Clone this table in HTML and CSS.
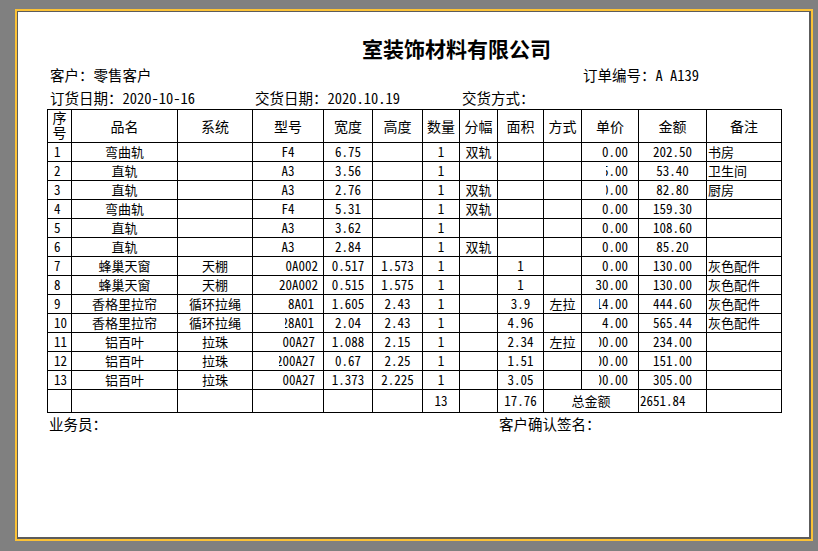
FILE: index.html
```html
<!DOCTYPE html>
<html lang="zh-CN">
<head>
<meta charset="utf-8">
<title>销售订单</title>
<link rel="stylesheet" href="styles.css">
</head>
<body>
<div class="sheet">
  <div class="paper">
    <div class="title">室装饰材料有限公司</div>
    <div class="info">
      <span class="w533">客户：零售客户</span>
      <span>订单编号：A A139</span>
    </div>
    <div class="info info2">
      <span class="w205">订货日期：2020-10-16</span>
      <span class="w207">交货日期：2020.10.19</span>
      <span>交货方式：</span>
    </div>
    <div class="grid">
      <div class="h"><span class="stack">序号</span></div>
      <div class="h">品名</div>
      <div class="h">系统</div>
      <div class="h">型号</div>
      <div class="h">宽度</div>
      <div class="h">高度</div>
      <div class="h">数量</div>
      <div class="h">分幅</div>
      <div class="h">面积</div>
      <div class="h">方式</div>
      <div class="h">单价</div>
      <div class="h">金额</div>
      <div class="h">备注</div>

      <div class="l n">1</div><div>弯曲轨</div><div></div><div>F4</div><div>6.75</div><div></div><div>1</div><div>双轨</div><div></div><div></div><div class="p">0.00</div><div>202.50</div><div class="l">书房</div>
      <div class="l n">2</div><div>直轨</div><div></div><div>A3</div><div>3.56</div><div></div><div>1</div><div></div><div></div><div></div><div class="p"><span class="clip k3"><span>5.00</span></span></div><div>53.40</div><div class="l">卫生间</div>
      <div class="l n">3</div><div>直轨</div><div></div><div>A3</div><div>2.76</div><div></div><div>1</div><div>双轨</div><div></div><div></div><div class="p"><span class="clip k3"><span>0.00</span></span></div><div>82.80</div><div class="l">厨房</div>
      <div class="l n">4</div><div>弯曲轨</div><div></div><div>F4</div><div>5.31</div><div></div><div>1</div><div>双轨</div><div></div><div></div><div class="p">0.00</div><div>159.30</div><div class="l"></div>
      <div class="l n">5</div><div>直轨</div><div></div><div>A3</div><div>3.62</div><div></div><div>1</div><div></div><div></div><div></div><div class="p">0.00</div><div>108.60</div><div class="l"></div>
      <div class="l n">6</div><div>直轨</div><div></div><div>A3</div><div>2.84</div><div></div><div>1</div><div>双轨</div><div></div><div></div><div class="p">0.00</div><div>85.20</div><div class="l"></div>
      <div class="l n">7</div><div>蜂巢天窗</div><div>天棚</div><div class="m m5">0A002</div><div>0.517</div><div>1.573</div><div>1</div><div></div><div>1</div><div></div><div class="p">0.00</div><div>130.00</div><div class="l">灰色配件</div>
      <div class="l n">8</div><div>蜂巢天窗</div><div>天棚</div><div class="m m5">20A002</div><div>0.515</div><div>1.575</div><div>1</div><div></div><div>1</div><div></div><div class="p">30.00</div><div>130.00</div><div class="l">灰色配件</div>
      <div class="l n">9</div><div>香格里拉帘</div><div>循环拉绳</div><div class="m m9">8A01</div><div>1.605</div><div>2.43</div><div>1</div><div></div><div>3.9</div><div>左拉</div><div class="p"><span class="clip k4"><span>14.00</span></span></div><div>444.60</div><div class="l">灰色配件</div>
      <div class="l n">10</div><div>香格里拉帘</div><div>循环拉绳</div><div class="m m9"><span class="clip k4"><span>28A01</span></span></div><div>2.04</div><div>2.43</div><div>1</div><div></div><div>4.96</div><div></div><div class="p">4.00</div><div>565.44</div><div class="l">灰色配件</div>
      <div class="l n">11</div><div>铝百叶</div><div>拉珠</div><div class="m m8">00A27</div><div>1.088</div><div>2.15</div><div>1</div><div></div><div>2.34</div><div>左拉</div><div class="p"><span class="clip k4"><span>00.00</span></span></div><div>234.00</div><div class="l"></div>
      <div class="l n">12</div><div>铝百叶</div><div>拉珠</div><div class="m m8"><span class="clip k5"><span>200A27</span></span></div><div>0.67</div><div>2.25</div><div>1</div><div></div><div>1.51</div><div></div><div class="p"><span class="clip k4"><span>00.00</span></span></div><div>151.00</div><div class="l"></div>
      <div class="l n">13</div><div>铝百叶</div><div>拉珠</div><div class="m m8">00A27</div><div>1.373</div><div>2.225</div><div>1</div><div></div><div>3.05</div><div></div><div class="p"><span class="clip k4"><span>00.00</span></span></div><div>305.00</div><div class="l"></div>

      <div></div><div></div><div></div><div></div><div></div><div></div><div>13</div><div></div><div>17.76</div><div class="span2">总金额</div><div class="l">2651.84</div><div class="l"></div>
    </div>
    <div class="info foot">
      <span class="w449">业务员：</span>
      <span>客户确认签名：</span>
    </div>
  </div>
</div>
</body>
</html>
```

FILE: styles.css
```css
html, body {
  margin: 0;
  padding: 0;
}

body {
  background: #808080;
  font-family: "Noto Sans Mono CJK SC", "Noto Sans CJK SC", "Liberation Mono", monospace;
  color: #000;
  width: 818px;
  height: 551px;
  overflow: hidden;
}

.sheet {
  margin: 9px 0 0 15px;
  width: 798px;
  height: 532px;
  box-sizing: border-box;
  border: 2px solid #fcc236;
}

.paper {
  box-sizing: border-box;
  height: 100%;
  background: #fff;
  border-style: solid;
  border-color: #5c5c5c;
  border-width: 1px 2px 2px 1px;
  padding: 23px 0 0 29px;
}

.title {
  margin-left: 315px;
  height: 26px;
  line-height: 26px;
  font-size: 21px;
  font-weight: bold;
  white-space: nowrap;
}

.info {
  display: flex;
  margin-top: 4px;
  padding-left: 3px;
  height: 20px;
  line-height: 20px;
  font-size: 14.5px;
  white-space: nowrap;
}

.info2 {
  margin-top: 3px;
}

.foot {
  margin-top: 1px;
  padding-left: 2px;
}

.w533 { width: 533px; }
.w205 { width: 205px; }
.w207 { width: 207px; }
.w449 { width: 450px; }

.grid {
  margin-top: 1px;
  display: grid;
  grid-template-columns: 23px 105px 74px 70px 48px 49px 36px 37px 45px 37px 56px 67px 74px;
  grid-template-rows: 32px repeat(13, 18px) 22px;
  gap: 1px;
  padding: 1px;
  width: max-content;
  background: #000;
  font-size: 13px;
}

.grid > div {
  background: #fff;
  display: flex;
  align-items: center;
  justify-content: center;
  white-space: nowrap;
  overflow: hidden;
  line-height: 16px;
}

.grid > .h {
  font-size: 14px;
}

.stack {
  display: block;
  writing-mode: vertical-rl;
  text-orientation: upright;
  line-height: 20px;
  letter-spacing: 1px;
}

.grid > .l {
  justify-content: flex-start;
  padding-left: 1px;
}

.grid > .n {
  padding-left: 6px;
}

.grid > .p {
  justify-content: flex-end;
  padding-right: 10px;
}

.grid > .m {
  justify-content: flex-end;
}

.grid > .m5 { padding-right: 5px; }
.grid > .m9 { padding-right: 9px; }
.grid > .m8 { padding-right: 8px; }

.grid > .span2 {
  grid-column: span 2;
}

.clip {
  display: block;
  overflow: hidden;
  direction: rtl;
  text-align: right;
  white-space: nowrap;
}

.clip > span {
  direction: ltr;
  unicode-bidi: bidi-override;
}

.k3 { width: 22px; }
.k4 { width: 29px; }
.k5 { width: 36px; }
```
